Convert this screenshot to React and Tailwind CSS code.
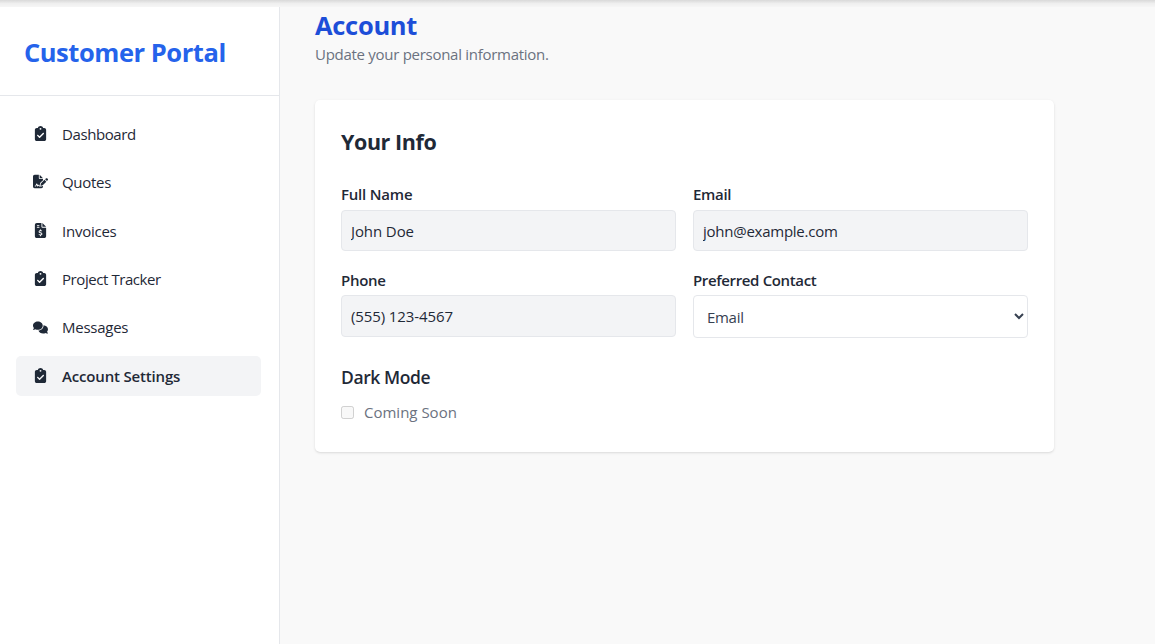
import React from "react";
import { FaClipboardCheck, FaFileSignature, FaFileInvoiceDollar, FaComments } from "react-icons/fa6";

const NAV = [
  { label: "Dashboard", Icon: FaClipboardCheck, track: "tracking-[-0.4px]" },
  { label: "Quotes", Icon: FaFileSignature, track: "tracking-[-0.3px]" },
  { label: "Invoices", Icon: FaFileInvoiceDollar, track: "tracking-[-0.25px]" },
  { label: "Project Tracker", Icon: FaClipboardCheck, track: "tracking-[-0.43px]" },
  { label: "Messages", Icon: FaComments, track: "tracking-[-0.25px]" },
  { label: "Account Settings", Icon: FaClipboardCheck, track: "tracking-[-0.17px]", active: true },
];

function NavItem({ label, Icon, track, active }) {
  return (
    <a
      className={`flex h-10 items-center rounded-[5px] pl-4 text-[15px] text-[#1f2937] ${
        active ? "bg-gray-100 font-semibold" : ""
      }`}
    >
      <span className="mr-[13px] flex w-[17px] justify-center pb-px">
        <Icon className="size-[15px]" />
      </span>
      <span className={`whitespace-nowrap ${track}`}>{label}</span>
    </a>
  );
}

function Field({ label, value, track, labelTrack, height }) {
  return (
    <label className="flex flex-col">
      <span className={`text-[15px] font-semibold ${labelTrack}`}>{label}</span>
      <input
        readOnly
        defaultValue={value}
        className={`w-full rounded-[4px] border border-gray-200 bg-gray-100 px-[9px] text-[15px] text-[#1f2937] outline-none ${height} ${track}`}
      />
    </label>
  );
}

export default function App() {
  return (
    <div className="flex h-[644px] w-[1155px] flex-col overflow-hidden bg-[#f9f9f9] font-['Open_Sans','Noto_Sans',sans-serif] text-[#1f2937]">
      <div className="h-[7px] shrink-0 bg-linear-to-b from-[#d9d9d9] via-[#efefef] via-50% to-[#f6f6f6]" />
      <div className="flex grow">
        <aside className="w-[280px] shrink-0 border-r border-gray-200 bg-white">
          <div className="flex h-[89px] items-center border-b border-gray-200 pt-0.5 pl-6">
            <h1 className="text-[25.5px] font-bold tracking-[-0.45px] whitespace-nowrap text-[#2563eb]">Customer Portal</h1>
          </div>
          <nav className="flex flex-col gap-[8.4px] pt-[18px] pr-[18px] pl-4">
            {NAV.map((item) => (
              <NavItem key={item.label} {...item} />
            ))}
          </nav>
        </aside>
        <main className="pl-[35px]">
          <h2 className="h-[35px] text-[25.5px] leading-[37px] font-bold tracking-[-0.3px] text-[#1d4ed8]">Account</h2>
          <p className="h-[58px] text-[15px] leading-6 tracking-[-0.28px] text-[#6b7280]">Update your personal information.</p>
          <section className="h-[352px] w-[739px] rounded-[5px] bg-white px-[26px] pt-6 shadow-sm">
            <h3 className="h-[57px] text-[21.5px] leading-[36px] font-bold tracking-[-0.42px]">Your Info</h3>
            <div className="grid grid-cols-2 gap-x-[17px]">
              <div className="h-[86px]">
                <Field label="Full Name" value="John Doe" track="tracking-[-0.1px]" labelTrack="h-[29px] leading-[26px] tracking-[-0.2px]" height="h-[41px]" />
              </div>
              <Field label="Email" value="john@example.com" track="tracking-[-0.25px]" labelTrack="h-[29px] leading-[26px] tracking-[-0.3px]" height="h-[41px]" />
              <Field label="Phone" value="(555) 123-4567" track="tracking-[-0.1px]" labelTrack="h-7 leading-[26px] tracking-[-0.3px]" height="h-[42px]" />
              <label className="flex flex-col">
                <span className="h-7 text-[15px] leading-[26px] font-semibold tracking-[-0.36px]">Preferred Contact</span>
                <select className="h-[43px] w-full rounded-[4px] border border-gray-200 bg-white px-[9px] text-[15px] tracking-[-0.3px] text-[#374151] outline-none">
                  <option>Email</option>
                </select>
              </label>
            </div>
            <h4 className="mt-6 text-[17.5px] leading-[30px] font-semibold tracking-[-0.4px]">Dark Mode</h4>
            <label className="mt-2 flex items-center text-[15px] leading-6 text-[#6b7280]">
              <input type="checkbox" disabled className="mr-2.5 size-[13px]" />
              <span>Coming Soon</span>
            </label>
          </section>
        </main>
      </div>
    </div>
  );
}
